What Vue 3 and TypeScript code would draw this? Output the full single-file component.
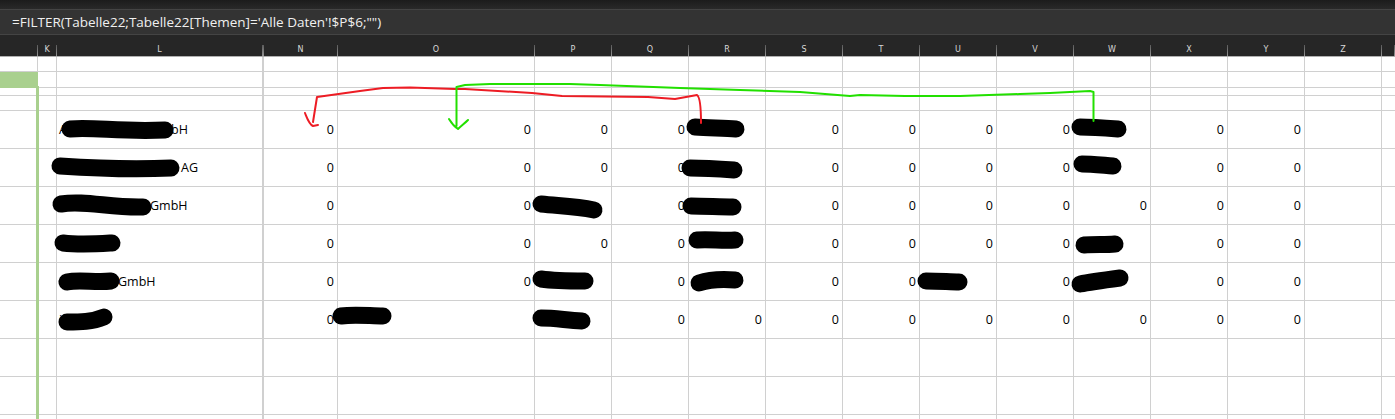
<script setup lang="ts">
const cols = [
  { n: '', w: 38 }, { n: 'K', w: 19 }, { n: 'L', w: 207 }, { n: 'N', w: 74 }, { n: 'O', w: 197 },
  { n: 'P', w: 77 }, { n: 'Q', w: 77 }, { n: 'R', w: 77 }, { n: 'S', w: 77 }, { n: 'T', w: 77 },
  { n: 'U', w: 77 }, { n: 'V', w: 77 }, { n: 'W', w: 77 }, { n: 'X', w: 77 }, { n: 'Y', w: 77 },
  { n: 'Z', w: 77 }, { n: '', w: 13 },
]
const heights = [15, 16, 8, 15, 38, 38, 38, 38, 38, 38, 38, 38, 5]
const names: Record<number, { lead?: string; t: string; pad: number }> = {
  4: { lead: 'A', t: 'bH', pad: 2 },
  5: { t: 'AG', pad: 124 },
  6: { t: 'GmbH', pad: 93 },
  8: { t: 'GmbH', pad: 61 },
  9: { t: 'i', pad: 2 },
}
const zeros: Record<number, string[]> = {
  4: ['N', 'O', 'P', 'Q', 'S', 'T', 'U', 'V', 'X', 'Y'],
  5: ['N', 'O', 'P', 'Q', 'S', 'T', 'U', 'V', 'X', 'Y'],
  6: ['N', 'O', 'Q', 'S', 'T', 'U', 'V', 'W', 'X', 'Y'],
  7: ['N', 'O', 'P', 'Q', 'S', 'T', 'U', 'V', 'X', 'Y'],
  8: ['N', 'O', 'Q', 'S', 'T', 'V', 'X', 'Y'],
  9: ['N', 'Q', 'R', 'S', 'T', 'U', 'V', 'W', 'X', 'Y'],
}
function cellText(r: number, c: string): string {
  return zeros[r]?.includes(c) ? '0' : ''
}
const blots = [
  'M70 129 C95 127 120 132 165 130',
  'M60 166 C90 168 130 170 171 168',
  'M61 204 C85 200 110 208 143 207',
  'M63 243 C80 245 95 244 112 243',
  'M67 282 C80 279 95 283 111 281',
  'M67 322 C80 322 92 322 104 317',
  'M341 316 C355 314 370 316 383 316',
  'M541 204 C560 206 575 206 594 210',
  'M541 279 C555 281 570 281 585 281',
  'M541 318 C555 318 565 320 582 321',
  'M695 127 C710 128 725 128 736 129',
  'M690 168 C705 168 720 169 734 170',
  'M691 206 C705 206 720 207 733 207',
  'M697 240 C710 239 722 241 735 240',
  'M699 283 C708 280 722 279 735 280',
  'M926 281 C940 281 950 282 959 282',
  'M1080 127 C1090 127 1105 128 1118 129',
  'M1082 164 C1090 164 1100 165 1113 166',
  'M1084 245 C1095 244 1105 245 1115 244',
  'M1080 284 C1090 282 1105 280 1120 278',
]
</script>

<template>
  <div class="app">
    <div class="top"></div>
    <div class="formula">=FILTER(Tabelle22;Tabelle22[Themen]='Alle Daten'!$P$6;"")</div>
    <div class="gap"></div>
    <div class="headers">
      <div v-for="(c, i) in cols" :key="i" class="head" :class="{ thick: c.n === 'L' }" :style="{ width: c.w + 'px' }">{{ c.n }}</div>
    </div>
    <div class="sheet">
      <div v-for="(h, r) in heights" :key="r" class="row" :style="{ height: h + 'px' }">
        <div
          v-for="(c, i) in cols"
          :key="i"
          class="cell"
          :class="{ thick: c.n === 'L', name: c.n === 'L', fill: r === 1 && i === 0, noborder: i === cols.length - 1 }"
          :style="{ width: c.w + 'px', paddingLeft: c.n === 'L' && names[r] ? names[r].pad + 'px' : undefined }"
        >
          <template v-if="c.n === 'L'">
            <span v-if="names[r]?.lead" class="lead">{{ names[r].lead }}</span>{{ names[r]?.t }}
          </template>
          <template v-else>{{ cellText(r, c.n) }}</template>
        </div>
      </div>
      <svg class="overlay" width="1395" height="362" viewBox="0 57 1395 362" fill="none">
        <rect x="36" y="86" width="3" height="333" fill="#a9d08e" />
        <path v-for="(d, i) in blots" :key="i" :d="d" stroke="#000" stroke-width="17" stroke-linecap="round" />
        <path d="M305 113 C307 118 309 124 313 126 L318 125 M313 122 L317 97 L360 91 L383 88 L410 87.500 L455 89 L465 89 L532 93 L562 96 L648 97 L675 99 L697 95 C700 97 701 105 701 123" stroke="#ed1c24" stroke-width="2" stroke-linejoin="round" stroke-linecap="round" />
        <path d="M456.500 126 L456.500 87 L465 85 L490 84 L570 84 L600 85 L680 88 L740 90 L800 92 L850 96 L860 95 L905 96 L960 96 L1020 94 L1050 93 L1090 91 L1093.500 92 L1093.500 121 M449 119 C452 124 455 127 458 129 C461 126 465 123 468 120" stroke="#22e000" stroke-width="2" stroke-linejoin="round" stroke-linecap="round" />
      </svg>
    </div>
  </div>
</template>

<style>
html, body { margin: 0; padding: 0; background: #fff; overflow: hidden; }
</style>

<style scoped>
.app { width: 1395px; height: 419px; overflow: hidden; background: #fff; font-family: "Open Sans", sans-serif; display: flex; flex-direction: column; }
.top { height: 9px; background: linear-gradient(#1c1c1c, #292929); flex: none; }
.formula { height: 26px; flex: none; box-sizing: border-box; background: #333; border-top: 1px solid #444; border-bottom: 1px solid #444; padding-left: 12px; color: #f0f0f0; font-size: 13.5px; line-height: 24px; white-space: nowrap; }
.gap { height: 10px; flex: none; background: #262626; }
.headers { height: 12px; flex: none; display: flex; background: #262626; border-bottom: 1px solid #b0b0b0; box-sizing: border-box; }
.head { flex: none; box-sizing: border-box; border-right: 1px solid #777; border-image: linear-gradient(#555, #999) 1; color: #d8d8d8; font-family: "DejaVu Sans", sans-serif; font-size: 8px; line-height: 10px; text-align: center; }
.head.thick { border-right-width: 2px; }
.sheet { flex: 1; min-height: 0; position: relative; }
.row { display: flex; }
.cell { flex: none; box-sizing: border-box; border-right: 1px solid #d0d0d0; border-bottom: 1px solid #d0d0d0; color: #000; font-size: 12.5px; display: flex; align-items: center; justify-content: flex-end; padding-right: 3px; white-space: nowrap; }
.cell.name { justify-content: flex-start; }
.lead { display: inline-block; width: 112px; }
.cell.thick { border-right: 2px solid #d0d0d0; }
.cell.fill { background: #a9d08e; border-right-color: #a9d08e; border-bottom-color: #a9d08e; }
.cell.noborder { border-right: none; }
.overlay { position: absolute; left: 0; top: 0; pointer-events: none; }
</style>
